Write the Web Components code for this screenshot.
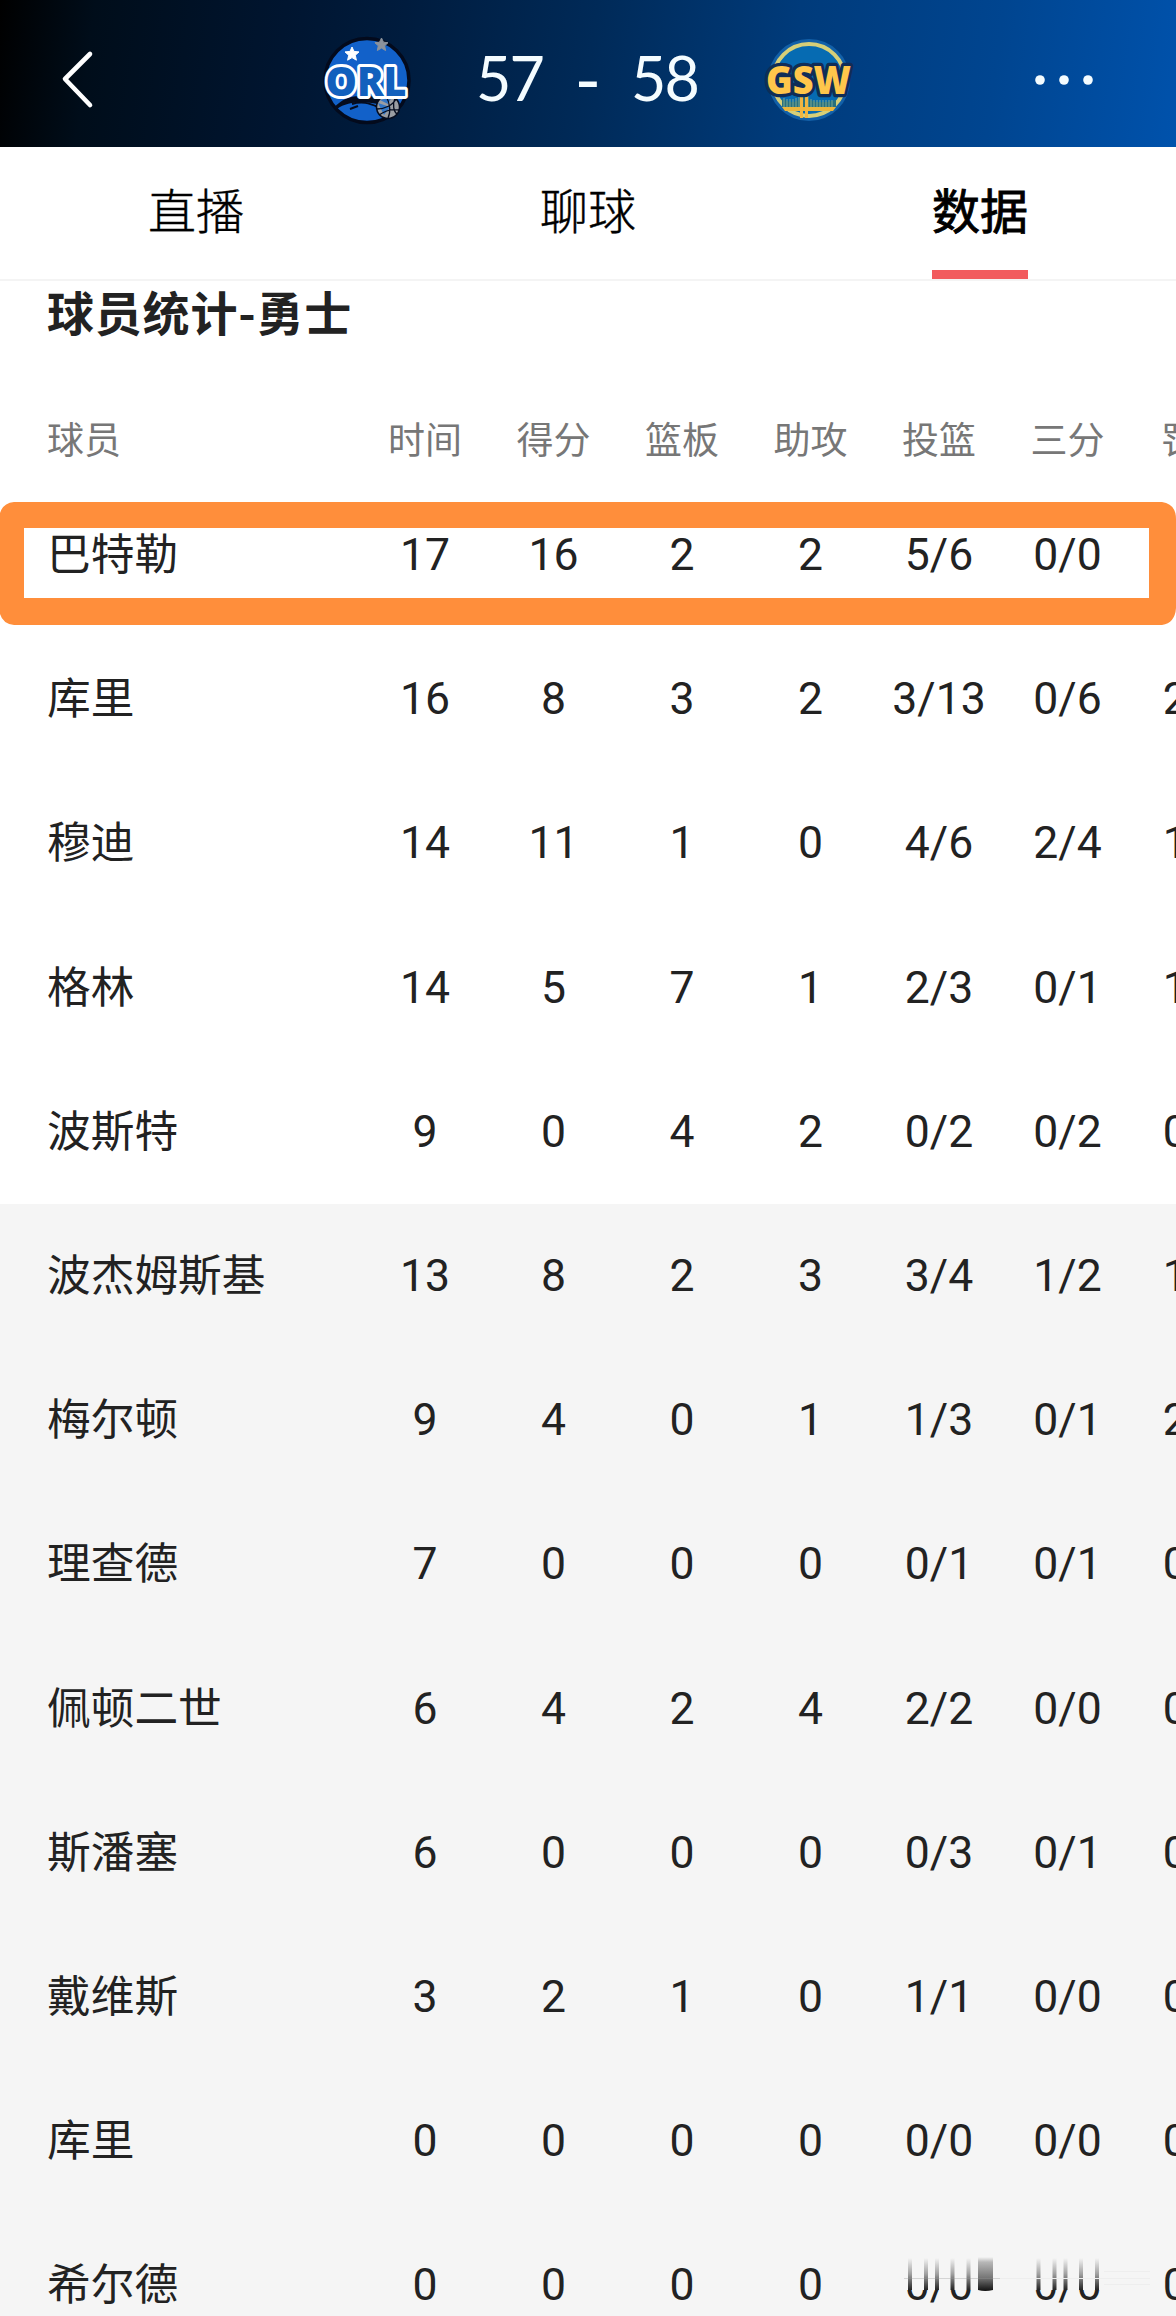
<!DOCTYPE html>
<html lang="zh-CN">
<head>
<meta charset="utf-8">
<title>球员统计</title>
<style>
    html, body {
        margin: 0;
        height: 2316px;
        overflow: hidden;
        background: #fff;
        font-family: Roboto, "Noto Sans CJK SC", sans-serif;
    }
</style>
</head>
<body>
<match-page>
    <match-header slot="header" home="57" away="58">
        <team-logo slot="home" team="ORL"></team-logo>
        <team-logo slot="away" team="GSW"></team-logo>
    </match-header>
    <tab-bar slot="tabs">
        <tab-item>直播</tab-item>
        <tab-item>聊球</tab-item>
        <tab-item active>数据</tab-item>
    </tab-bar>
    <player-stats heading="球员统计-勇士">
        <stats-row head name="球员" values="时间,得分,篮板,助攻,投篮,三分,罚"></stats-row>
        <stats-row marked name="巴特勒" values="17,16,2,2,5/6,0/0"></stats-row>
        <stats-row name="库里" values="16,8,3,2,3/13,0/6,2"></stats-row>
        <stats-row name="穆迪" values="14,11,1,0,4/6,2/4,1"></stats-row>
        <stats-row name="格林" values="14,5,7,1,2/3,0/1,1"></stats-row>
        <stats-row name="波斯特" values="9,0,4,2,0/2,0/2,0"></stats-row>
        <stats-row bench name="波杰姆斯基" values="13,8,2,3,3/4,1/2,1"></stats-row>
        <stats-row bench name="梅尔顿" values="9,4,0,1,1/3,0/1,2"></stats-row>
        <stats-row bench name="理查德" values="7,0,0,0,0/1,0/1,0"></stats-row>
        <stats-row bench name="佩顿二世" values="6,4,2,4,2/2,0/0,0"></stats-row>
        <stats-row bench name="斯潘塞" values="6,0,0,0,0/3,0/1,0"></stats-row>
        <stats-row bench name="戴维斯" values="3,2,1,0,1/1,0/0,0"></stats-row>
        <stats-row bench name="库里" values="0,0,0,0,0/0,0/0,0"></stats-row>
        <stats-row bench smeared name="希尔德" values="0,0,0,0,0/0,0/0,0"></stats-row>
    </player-stats>
</match-page>

<script>
class MatchPage extends HTMLElement {
    constructor() {
        super();
        const shadowRoot = this.attachShadow({ mode: 'open' });
        shadowRoot.innerHTML = `
            <style>
                :host {
                    display: flex;
                    flex-direction: column;
                    width: 1176px;
                    height: 2316px;
                    overflow: hidden;
                }
            </style>
            <slot name="header"></slot>
            <slot name="tabs"></slot>
            <slot></slot>
        `;
    }
}

class MatchHeader extends HTMLElement {
    constructor() {
        super();
        const shadowRoot = this.attachShadow({ mode: 'open' });
        shadowRoot.innerHTML = `
            <style>
                :host {
                    display: grid;
                    grid-template-columns: 312px 1fr 312px;
                    align-items: center;
                    flex: none;
                    height: 147px;
                    padding-top: 12px;
                    box-sizing: border-box;
                    color: #f4fcff;
                    background: linear-gradient(98deg, #000 0%, #000d1a 8%, #001530 24%, #001c3e 34%, #002a58 50%, #003b7b 67%, #004590 84%, #0052ac 100%);
                }
                svg { display: block; }
                .back { margin-left: 56px; }
                .more { justify-self: end; margin-right: 76px; }
                .board {
                    display: flex;
                    align-items: center;
                    justify-content: space-between;
                }
                .score {
                    display: grid;
                    grid-template-columns: 64px 1fr 64px;
                    width: 219px;
                    justify-items: center;
                    padding: 0 2px 3px 0;
                    font: 400 61px/80px Lato, sans-serif;
                    letter-spacing: -1.8px;
                }
                .dash { font-size: 72px; }
            </style>
            <svg class="back" width="44" height="64" viewBox="0 0 44 64" fill="none" stroke="#fff" stroke-width="4.6" stroke-linecap="round" stroke-linejoin="round">
                <path d="M34 6 9 31 34 57"/>
            </svg>
            <div class="board">
                <slot name="home"></slot>
                <div class="score">
                    <span class="home"></span>
                    <span class="dash">-</span>
                    <span class="away"></span>
                </div>
                <slot name="away"></slot>
            </div>
            <svg class="more" width="72" height="20" viewBox="0 0 72 20" fill="#f4fcff">
                <circle cx="12" cy="10" r="4.8"/>
                <circle cx="36" cy="10" r="4.8"/>
                <circle cx="60" cy="10" r="4.8"/>
            </svg>
        `;
    }

    connectedCallback() {
        this.shadowRoot.querySelector('.home').textContent = this.getAttribute('home');
        this.shadowRoot.querySelector('.away').textContent = this.getAttribute('away');
    }
}

const LOGOS = {
    ORL: `
        <circle cx="55" cy="55.500" r="42" fill="#1261c9" stroke="#030a1c" stroke-width="3.500"/>
        <path d="M22 83C31 72 46 68 68 73L69 80C55 76 36 76 25 84Z" fill="#050c1e"/>
        <path d="M40 79C50 76 57 78 66 82M46 81l-8 3" fill="none" stroke="#050c1e" stroke-width="2"/>
        <path d="M40 22l2 4.400 5 .5-3.700 3.300 1.100 5-4.400-2.600-4.400 2.600 1.100-5-3.700-3.300 5-.5z" fill="#fff" stroke="#fff"/>
        <path d="M69.500 13l2 4.200 4.500.5-3.400 3.100 1 4.700-4.100-2.400-4.200 2.400 1-4.700-3.400-3.100 4.600-.5z" fill="#8c929b" stroke="#8c929b"/>
        <circle cx="76" cy="82" r="11.500" fill="#9a9da2" stroke="#050c1e" stroke-width="1.500"/>
        <path d="M66 78L72 90 78 82ZM68 75l8 4 4-7z" fill="#3175c5"/>
        <path d="M65 84C73 84 81 80 84 74M74 71C78 78 79 87 76 93M67 90C74 85 82 84 87 85M83 73C80 80 82 87 85 89" fill="none" stroke="#050c1e" stroke-width="1.300"/>
        <text x="54" y="70.500" text-anchor="middle" textLength="81" lengthAdjust="spacingAndGlyphs" font-family="Open Sans" font-weight="800" font-size="41" fill="#1260bd" stroke="#fff" stroke-width="6" stroke-linejoin="round" paint-order="stroke">ORL</text>`,
    GSW: `
        <circle cx="55" cy="55" r="41" fill="#1260a8"/>
        <circle cx="55" cy="55" r="36" fill="#066bb2" stroke="#d6cf78" stroke-width="4"/>
        <path d="M28 74Q46 82 47 68Q58 82 82 75V82H28Z" fill="#28717e"/>
        <path d="M30 73v10M33 74v9M36 74v9M39 74v9M42 73v9M45 71v11M54 71v11M57 74v9M60 75v8M63 75v8M66 75v8M69 75v8M72 75v8M75 75v8M78 75v8" stroke="#7faa91" stroke-width="1"/>
        <path d="M28 82H82L79 86H31Z" fill="#ecb63b"/>
        <path d="M46 69h3v24h-3zM51 69h3v24h-3z" fill="#f0b541"/>
        <text x="54.500" y="69" text-anchor="middle" textLength="85" lengthAdjust="spacingAndGlyphs" font-family="Open Sans" font-weight="800" font-size="39" fill="#ffc64b" stroke="#102d57" stroke-width="6.500" stroke-linejoin="round" paint-order="stroke">GSW</text>`
};

class TeamLogo extends HTMLElement {
    connectedCallback() {
        const shadowRoot = this.attachShadow({ mode: 'open' });
        shadowRoot.innerHTML = `
            <style>
                :host { display: block; width: 110px; height: 110px; }
                svg { display: block; overflow: visible; }
            </style>
            <svg width="110" height="110" viewBox="0 0 110 110">${LOGOS[this.getAttribute('team')] || ''}</svg>
        `;
    }
}

class TabBar extends HTMLElement {
    constructor() {
        super();
        const shadowRoot = this.attachShadow({ mode: 'open' });
        shadowRoot.innerHTML = `
            <style>
                :host {
                    display: grid;
                    grid-template-columns: repeat(3, 1fr);
                    flex: none;
                    height: 134px;
                    box-sizing: border-box;
                    border-bottom: 2px solid #f4f4f4;
                }
            </style>
            <slot></slot>
        `;
    }
}

class TabItem extends HTMLElement {
    constructor() {
        super();
        const shadowRoot = this.attachShadow({ mode: 'open' });
        shadowRoot.innerHTML = `
            <style>
                :host {
                    display: flex;
                    justify-content: center;
                    color: #000;
                    font: 300 48px/123px "Noto Sans CJK SC", sans-serif;
                    -webkit-text-stroke: .4px #000;
                }
                .label {
                    box-sizing: border-box;
                    height: 132px;
                    border-bottom: 9px solid transparent;
                }
                :host([active]) .label {
                    font-weight: 400;
                    -webkit-text-stroke: .9px #000;
                    border-color: #f25b5e;
                }
            </style>
            <div class="label"><slot></slot></div>
        `;
    }
}

class PlayerStats extends HTMLElement {
    constructor() {
        super();
        const shadowRoot = this.attachShadow({ mode: 'open' });
        shadowRoot.innerHTML = `
            <style>
                :host { display: block; }
                h2 {
                    margin: 0;
                    padding: 0 47px 57px;
                    color: #222;
                    font: 700 47px/60px "Noto Sans CJK SC", sans-serif;
                    letter-spacing: .8px;
                }
            </style>
            <h2></h2>
            <slot></slot>
        `;
    }

    connectedCallback() {
        this.shadowRoot.querySelector('h2').textContent = this.getAttribute('heading');
    }
}

class StatsRow extends HTMLElement {
    constructor() {
        super();
        const shadowRoot = this.attachShadow({ mode: 'open' });
        shadowRoot.innerHTML = `
            <style>
                :host {
                    position: relative;
                    display: grid;
                    grid-template-columns: 313.75px repeat(6, 128.5px) 1fr;
                    align-items: center;
                    height: 144.2px;
                    padding-left: 47px;
                    box-sizing: border-box;
                    color: #222;
                    font-size: 43.7px;
                    line-height: 60px;
                    overflow: hidden;
                    white-space: nowrap;
                }
                :host([head]) {
                    height: 85px;
                    color: #777;
                    font-size: 37px;
                }
                :host([bench]) { background: #f5f5f5; }
                :host([marked]) { overflow: visible; }
                .name {
                    padding-bottom: 8px;
                    font-family: "Noto Sans CJK SC", sans-serif;
                }
                .value { font-size: 44.5px; text-align: center; }
                :host([head]) .name { padding-bottom: 5px; }
                :host([head]) .value { padding-top: 2px; font-size: 37px; }
                /* the last column runs off the right edge */
                .value:nth-of-type(8) { text-align: left; margin-left: 31px; }
                :host([head]) .value:nth-of-type(8) { margin-left: 29px; }
                .frame {
                    position: absolute;
                    left: 0;
                    top: 19px;
                    width: 1176px;
                    height: 123px;
                }
                .smear {
                    position: absolute;
                    left: 900px;
                    top: 40px;
                }
            </style>
        `;
    }

    connectedCallback() {
        const name = document.createElement('span');
        name.className = 'name';
        name.textContent = this.getAttribute('name');
        this.shadowRoot.append(name);

        for (const text of this.getAttribute('values').split(',')) {
            const value = document.createElement('span');
            value.className = 'value';
            value.textContent = text;
            this.shadowRoot.append(value);
        }

        if (this.hasAttribute('marked')) {
            this.shadowRoot.append(this.overlay(`
                <svg class="frame" viewBox="0 0 1176 123">
                    <path fill="#ff8e3b" fill-rule="evenodd" d="M14 0H1162Q1176 2 1176 17V106Q1175 121 1162 123H14Q3 122 0 112V11Q3 1 14 0ZM24 26V96H1149V26Z"/>
                </svg>`));
        }
        if (this.hasAttribute('smeared')) {
            this.shadowRoot.append(this.overlay(this.smear()));
        }
    }

    overlay(markup) {
        const template = document.createElement('template');
        template.innerHTML = markup;
        return template.content;
    }

    // vertical streaks over the upper part of the two shooting columns
    smear() {
        const streaks = [8, 24, 35, 50.5, 66.5, 136.5, 152.5, 163.5, 179, 195];
        return `
            <svg class="smear" width="260" height="40" viewBox="0 0 260 40">
                <defs>
                    <linearGradient id="fade" x1="0" y1="0" x2="0" y2="1">
                        <stop offset="0" stop-color="#222" stop-opacity="0"/>
                        <stop offset=".5" stop-color="#222" stop-opacity=".4"/>
                        <stop offset="1" stop-color="#222"/>
                    </linearGradient>
                    <linearGradient id="block" x1="0" y1="0" x2="0" y2="1">
                        <stop offset="0" stop-color="#111" stop-opacity="0"/>
                        <stop offset=".15" stop-color="#111" stop-opacity=".27"/>
                        <stop offset=".6" stop-color="#111" stop-opacity=".55"/>
                        <stop offset="1" stop-color="#111"/>
                    </linearGradient>
                </defs>
                <rect width="230" height="37" fill="#f5f5f5"/>
                ${streaks.map(x => `<rect x="${x}" y="5" width="4" height="32" fill="url(#fade)"/>`).join('')}
                <path d="M78 4H93V37Q85 39 78 37Z" fill="url(#block)"/>
                <path d="M4 25.500H100" stroke="#999" stroke-opacity=".35"/>
                <path d="M100 25.500H250M204 18.500H250M204 31.500H250" stroke="#eee"/>
            </svg>`;
    }
}

customElements.define('match-page', MatchPage);
customElements.define('match-header', MatchHeader);
customElements.define('team-logo', TeamLogo);
customElements.define('tab-bar', TabBar);
customElements.define('tab-item', TabItem);
customElements.define('player-stats', PlayerStats);
customElements.define('stats-row', StatsRow);
</script>
</body>
</html>
